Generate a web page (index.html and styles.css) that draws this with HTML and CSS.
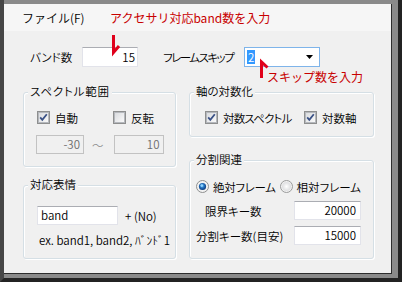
FILE: index.html
```html
<!DOCTYPE html>
<html lang="ja">
<head>
<meta charset="utf-8">
<link rel="stylesheet" href="styles.css">
</head>
<body>
<div class="frame">
  <div class="window">
    <div class="menubar"><span class="menu-item">ファイル(F)</span></div>
    <div class="content">
      <div class="top-row">
        <span class="lbl lbl-band">バンド数</span>
        <div class="textbox tb-band">15</div>
        <span class="lbl lbl-skip">フレームスキップ</span>
        <div class="combo">
          <span class="combo-sel">2</span>
          <svg class="combo-arrow" width="7" height="4" viewBox="0 0 7 4"><path d="M0 0H7L3.5 4Z" fill="#000"/></svg>
        </div>
      </div>
      <div class="groups">
        <div class="col col-left">
          <div class="group g-spec">
            <div class="gtitle gtitle-spec">スペクトル範囲</div>
            <div class="gbody">
              <div class="grow checks">
                <label class="check item-auto">
                  <svg class="cb" width="13" height="13" viewBox="0 0 13 13"><rect x="0.5" y="0.5" width="12" height="12" fill="#f4f4f4" stroke="#8e8f8f"/><rect x="1.5" y="1.5" width="10" height="10" fill="url(#g1)" stroke="#b5b8bd"/><path d="M3.2 6.4L5.3 8.8L9.8 3.2" fill="none" stroke="#3a5186" stroke-width="1.8"/></svg>
                  <span>自動</span>
                </label>
                <label class="check">
                  <svg class="cb" width="13" height="13" viewBox="0 0 13 13"><rect x="0.5" y="0.5" width="12" height="12" fill="#f4f4f4" stroke="#8e8f8f"/><rect x="1.5" y="1.5" width="10" height="10" fill="url(#g1)" stroke="#b5b8bd"/></svg>
                  <span>反転</span>
                </label>
              </div>
              <div class="grow ranges">
                <div class="textbox disabled tb-min">-30</div>
                <span class="tilde">～</span>
                <div class="textbox disabled tb-max">10</div>
              </div>
            </div>
          </div>
          <div class="group g-name">
            <div class="gtitle">対応表情</div>
            <div class="gbody">
              <div class="grow name-row">
                <div class="textbox tb-name">band</div>
                <span class="plus">+ (No)</span>
              </div>
              <div class="example">ex. band1, band2, ﾊﾞﾝﾄﾞ1</div>
            </div>
          </div>
        </div>
        <div class="col col-right">
          <div class="group g-log">
            <div class="gtitle">軸の対数化</div>
            <div class="gbody">
              <div class="grow checks">
                <label class="check item-logspec">
                  <svg class="cb" width="13" height="13" viewBox="0 0 13 13"><rect x="0.5" y="0.5" width="12" height="12" fill="#f4f4f4" stroke="#8e8f8f"/><rect x="1.5" y="1.5" width="10" height="10" fill="url(#g1)" stroke="#b5b8bd"/><path d="M3.2 6.4L5.3 8.8L9.8 3.2" fill="none" stroke="#3a5186" stroke-width="1.8"/></svg>
                  <span class="lbl-logspec">対数スペクトル</span>
                </label>
                <label class="check">
                  <svg class="cb" width="13" height="13" viewBox="0 0 13 13"><rect x="0.5" y="0.5" width="12" height="12" fill="#f4f4f4" stroke="#8e8f8f"/><rect x="1.5" y="1.5" width="10" height="10" fill="url(#g1)" stroke="#b5b8bd"/><path d="M3.2 6.4L5.3 8.8L9.8 3.2" fill="none" stroke="#3a5186" stroke-width="1.8"/></svg>
                  <span>対数軸</span>
                </label>
              </div>
            </div>
          </div>
          <div class="group g-split">
            <div class="gtitle">分割関連</div>
            <div class="gbody">
              <div class="grow radios">
                <label class="check item-abs">
                  <svg class="rb" width="13" height="13" viewBox="0 0 13 13"><circle cx="6.5" cy="6.5" r="6" fill="#f2f2f2" stroke="#8e8f8f"/><circle cx="6.5" cy="6.5" r="3.6" fill="url(#g2)"/><circle cx="5.8" cy="5.6" r="1.3" fill="#8fd3ff"/></svg>
                  <span>絶対フレーム</span>
                </label>
                <label class="check">
                  <svg class="rb" width="13" height="13" viewBox="0 0 13 13"><circle cx="6.5" cy="6.5" r="6" fill="#f2f2f2" stroke="#9a9b9b"/><circle cx="6.5" cy="6.5" r="4.5" fill="url(#g3)"/></svg>
                  <span>相対フレーム</span>
                </label>
              </div>
              <div class="grow field-row">
                <span class="lbl lbl-limit">限界キー数</span>
                <div class="textbox tb-num">20000</div>
              </div>
              <div class="grow field-row field-row2">
                <span class="lbl">分割キー数(目安)</span>
                <div class="textbox tb-num">15000</div>
              </div>
            </div>
          </div>
        </div>
      </div>
    </div>
    <div class="note note-band">アクセサリ対応band数を入力</div>
    <div class="note note-skip">スキップ数を入力</div>
    <svg class="arrows" width="388" height="270" viewBox="0 0 388 270">
      <path d="M109.5 31V48.5L115 42" fill="none" stroke="#e0001b" stroke-width="3"/>
      <path d="M257.5 74V58L263.5 63.5" fill="none" stroke="#e0001b" stroke-width="3"/>
    </svg>
  </div>
</div>
<svg width="0" height="0" class="defs">
  <defs>
    <linearGradient id="g1" x1="0" y1="0" x2="1" y2="1"><stop offset="0" stop-color="#d8dadd"/><stop offset="1" stop-color="#fbfbfb"/></linearGradient>
    <radialGradient id="g2" cx="0.45" cy="0.4" r="0.6"><stop offset="0" stop-color="#5fb7f2"/><stop offset="0.6" stop-color="#1a62b0"/><stop offset="1" stop-color="#0d3a78"/></radialGradient>
    <radialGradient id="g3" cx="0.5" cy="0.5" r="0.6"><stop offset="0" stop-color="#ffffff"/><stop offset="1" stop-color="#d6d7d9"/></radialGradient>
  </defs>
</svg>
</body>
</html>
```

FILE: styles.css
```css
html, body {
  margin: 0;
  padding: 0;
  background: #2a2a2a;
}
body {
  font-family: "Noto Sans CJK JP", "Noto Sans", sans-serif;
  font-size: 11.5px;
  font-weight: 350;
  line-height: 14px;
  color: #000;
  font-feature-settings: "palt";
}
.defs {
  position: absolute;
}
.frame {
  width: 402px;
  height: 282px;
  box-sizing: border-box;
  background: #8a8a8a;
  border-left: 4px solid #464646;
  border-right: 4px solid #232323;
  border-bottom: 4px solid #232323;
  padding: 4px 6px 4px 0;
}
.window {
  position: relative;
  height: 100%;
  box-sizing: border-box;
  background: #f0f0f0;
  border-right: 1px solid #2c2c2c;
  border-bottom: 1px solid #2c2c2c;
  display: flex;
  flex-direction: column;
}
.menubar {
  height: 27px;
  background: #f6f6f6;
  display: flex;
  align-items: center;
  padding-left: 18px;
  font-size: 12px;
  font-feature-settings: normal;
}
.content {
  flex: 1;
}
.top-row {
  display: flex;
  align-items: center;
  height: 20px;
  margin-top: 16px;
  padding-left: 26px;
}
.lbl {
  white-space: nowrap;
}
.lbl-band {
  width: 52px;
}
.lbl-skip {
  width: 81px;
  margin-left: 25px;
  letter-spacing: -1.5px;
}
.textbox {
  box-sizing: border-box;
  height: 19px;
  background: #fff;
  border: 1px solid #e2e3ea;
  border-top-color: #abadb3;
  text-align: right;
  padding: 0 3px;
  line-height: 17px;
  white-space: nowrap;
}
.tb-band {
  width: 56px;
  height: 20px;
  line-height: 18px;
  padding-right: 2px;
}
.textbox.disabled {
  background: #f0f0f0;
  border-color: #c2c2c2;
  color: #6d6d6d;
}
.combo {
  box-sizing: border-box;
  width: 76px;
  height: 20px;
  background: #fff;
  border: 1px solid #7eb4ea;
  display: flex;
  align-items: center;
  padding-left: 2px;
  padding-right: 6px;
}
.combo-sel {
  background: #3399ff;
  color: #fff;
  line-height: 14px;
  padding: 0 1px;
}
.combo-arrow {
  margin-left: auto;
}
.groups {
  display: flex;
  gap: 13px;
  margin-top: 25px;
  padding-left: 19px;
}
.col {
  display: flex;
  flex-direction: column;
}
.col-left {
  width: 153px;
  gap: 18px;
}
.col-right {
  width: 185px;
  gap: 23px;
}
.group {
  box-sizing: border-box;
  border: 1px solid #d5dfe5;
  border-radius: 3px;
  box-shadow: inset 1px 1px 0 #fff, 1px 1px 0 #fff;
}
.gtitle {
  display: table;
  margin: -9px 0 0 4px;
  padding: 0 2px;
  background: #f0f0f0;
  line-height: 14px;
  white-space: nowrap;
}
.gtitle-spec {
  letter-spacing: 0.8px;
}
.g-spec { height: 75px; }
.g-name { height: 74px; }
.g-log { height: 45px; }
.g-split { height: 99px; }
.g-spec .gbody, .g-name .gbody { padding-left: 13px; }
.g-log .gbody { padding-left: 15px; }
.g-split .gbody { padding-left: 6px; padding-right: 12px; }
.grow {
  display: flex;
  align-items: center;
}
.checks {
  margin-top: 13px;
  height: 13px;
}
.check {
  display: flex;
  align-items: center;
  gap: 5px;
  white-space: nowrap;
}
.cb, .rb {
  flex: none;
}
.item-auto {
  width: 76px;
}
.item-logspec {
  width: 99px;
}
.lbl-logspec {
  letter-spacing: -0.8px;
}
.ranges {
  margin-top: 11px;
  margin-left: -1px;
}
.tb-min {
  width: 48px;
}
.tilde {
  color: #8a8a8a;
  margin: 0 10px 0 8px;
}
.tb-max {
  width: 50px;
}
.name-row {
  margin-top: 15px;
}
.tb-name {
  width: 81px;
  text-align: left;
}
.plus {
  margin-left: 7px;
}
.example {
  margin-top: 8px;
  margin-left: 2px;
  white-space: nowrap;
}
.radios {
  margin-top: 14px;
  height: 13px;
}
.radios .check {
  gap: 4px;
}
.item-abs {
  width: 89px;
  letter-spacing: -0.3px;
}
.field-row {
  justify-content: space-between;
  margin-top: 8px;
}
.field-row2 {
  margin-top: 6px;
}
.lbl-limit {
  margin-left: 9px;
}
.tb-num {
  width: 67px;
  padding-right: 4px;
}
.note {
  position: absolute;
  color: #c80000;
  white-space: nowrap;
  line-height: 14px;
  font-size: 12px;
  font-weight: 400;
  font-feature-settings: normal;
}
.note-band {
  left: 106px;
  top: 7px;
}
.note-skip {
  left: 263px;
  top: 66px;
}
.arrows {
  position: absolute;
  left: 0;
  top: 0;
  pointer-events: none;
}
```
